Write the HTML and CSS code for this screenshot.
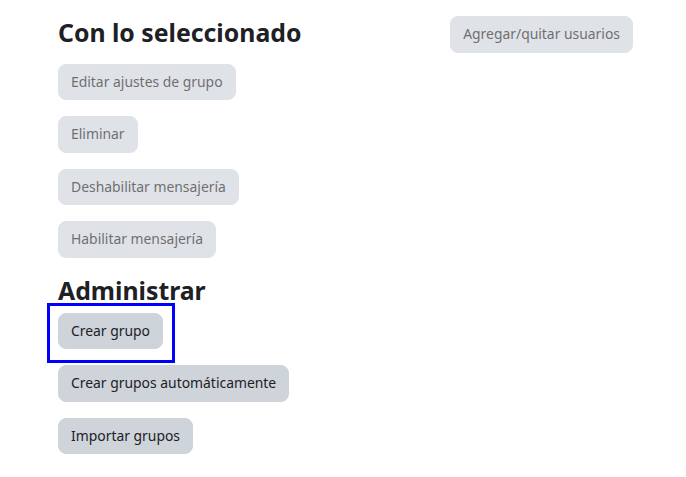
FILE: index.html
```html
<!DOCTYPE html>
<html lang="es">
  <head>
    <meta charset="UTF-8" />
    <meta name="viewport" content="width=device-width, initial-scale=1.0" />
    <title>Grupos</title>
    <link rel="stylesheet" href="styles.css">
  </head>
  <body>
    <div class="groups-page">
      <div class="actions-col">
        <h3 class="section-title">Con lo seleccionado</h3>
        <div class="btn-stack">
          <button class="btn" disabled>Editar ajustes de grupo</button>
          <button class="btn" disabled>Eliminar</button>
          <button class="btn" disabled>Deshabilitar mensajería</button>
          <button class="btn" disabled>Habilitar mensajería</button>
        </div>
        <h3 class="section-title section-title-tight">Administrar</h3>
        <div class="btn-stack">
          <div class="focus-wrap">
            <button class="btn">Crear grupo</button>
            <span class="focus-ring"></span>
          </div>
          <button class="btn">Crear grupos automáticamente</button>
          <button class="btn">Importar grupos</button>
        </div>
      </div>
      <div class="members-col">
        <button class="btn" disabled>Agregar/quitar usuarios</button>
      </div>
    </div>
  </body>
</html>
```

FILE: styles.css
```css
body {
  margin: 0;
  background-color: #ffffff;
  font-family: "Noto Sans", "Open Sans", sans-serif;
  color: #1d2125;
}

.groups-page {
  display: flex;
  justify-content: space-between;
  align-items: flex-start;
  width: 575px;
  padding: 16px 0 0 58px;
}

.actions-col {
  display: flex;
  flex-direction: column;
  align-items: flex-start;
}

.section-title {
  margin: 2px 0 16px;
  font-size: 24.8px;
  font-weight: 700;
  line-height: 1.2;
  color: #1d2125;
}

.section-title-tight {
  margin-bottom: 7px;
}

.btn-stack {
  display: flex;
  flex-direction: column;
  align-items: flex-start;
  gap: 16px;
  margin-bottom: 16px;
}

.btn {
  font-family: inherit;
  font-size: 13.9px;
  line-height: 22.5px;
  padding: 6px 12px;
  border: 1px solid #ced4da;
  border-radius: 8px;
  background-color: #ced4da;
  color: #1d2125;
  cursor: pointer;
}

.btn:disabled {
  opacity: 0.65;
  cursor: default;
}

.focus-wrap {
  position: relative;
}

.focus-ring {
  position: absolute;
  left: -11px;
  top: -10px;
  width: 122px;
  height: 54px;
  border: 3px solid #0000ff;
  pointer-events: none;
}
```
